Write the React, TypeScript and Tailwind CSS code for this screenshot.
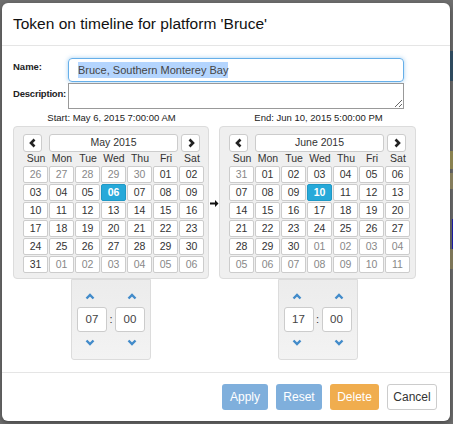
import React from "react";

const FONT = { fontFamily: '"Liberation Sans", Arial, sans-serif' };

type Day = { d: string; other?: boolean; active?: boolean };

function mk(list: (string | [string, boolean])[][], active: string): Day[][] {
  return list.map((row) =>
    row.map((c) =>
      typeof c === "string"
        ? { d: c, active: c === active }
        : { d: c[0], other: c[1] }
    )
  );
}

const o = (d: string): [string, boolean] => [d, true];

const MAY = mk(
  [
    [o("26"), o("27"), o("28"), o("29"), o("30"), "01", "02"],
    ["03", "04", "05", "06", "07", "08", "09"],
    ["10", "11", "12", "13", "14", "15", "16"],
    ["17", "18", "19", "20", "21", "22", "23"],
    ["24", "25", "26", "27", "28", "29", "30"],
    ["31", o("01"), o("02"), o("03"), o("04"), o("05"), o("06")],
  ],
  "06"
);

const JUNE = mk(
  [
    [o("31"), "01", "02", "03", "04", "05", "06"],
    ["07", "08", "09", "10", "11", "12", "13"],
    ["14", "15", "16", "17", "18", "19", "20"],
    ["21", "22", "23", "24", "25", "26", "27"],
    ["28", "29", "30", o("01"), o("02"), o("03"), o("04")],
    [o("05"), o("06"), o("07"), o("08"), o("09"), o("10"), o("11")],
  ],
  "10"
);

const DOW = ["Sun", "Mon", "Tue", "Wed", "Thu", "Fri", "Sat"];

function Chevron({ dir }: { dir: "up" | "down" | "left" | "right" }) {
  const paths = {
    up: "M1.5 6.5 L5 3 L8.5 6.5",
    down: "M1.5 3.5 L5 7 L8.5 3.5",
    left: "M6.5 1.5 L3 5 L6.5 8.5",
    right: "M3.5 1.5 L7 5 L3.5 8.5",
  };
  const horiz = dir === "left" || dir === "right";
  return (
    <svg width="10" height="10" viewBox="0 0 10 10">
      <path
        d={paths[dir]}
        fill="none"
        stroke={horiz ? "#222" : "#428bca"}
        strokeWidth={horiz ? 2.6 : 2.4}
        strokeLinecap="butt"
        strokeLinejoin="miter"
      />
    </svg>
  );
}

function Calendar({ title, rows }: { title: string; rows: Day[][] }) {
  return (
    <div className="h-[153px] rounded-[4px] border border-[#dcdcdc] bg-[#efefef] pl-[9px] pt-[7px]">
      <div className="flex h-[18px] items-stretch">
        <div className="flex w-[19px] items-center justify-center rounded-[3px] border border-[#ccc] bg-white">
          <Chevron dir="left" />
        </div>
        <div className="ml-[7px] flex w-[129px] items-center justify-center rounded-[3px] border border-[#ccc] bg-white text-[10.5px] text-[#333]">
          {title}
        </div>
        <div className="ml-[3px] flex w-[19px] items-center justify-center rounded-[3px] border border-[#ccc] bg-white">
          <Chevron dir="right" />
        </div>
      </div>
      <div className="flex h-[14px] items-center">
        {DOW.map((d) => (
          <div key={d} className="w-[26px] text-center text-[10.5px] text-[#333]">
            {d}
          </div>
        ))}
      </div>
      <div className="flex flex-col gap-px">
        {rows.map((r, i) => (
          <div key={i} className="flex gap-px">
            {r.map((c, j) => (
              <div
                key={j}
                className={
                  c.active
                    ? "flex h-[17px] w-[25px] items-center justify-center rounded-[2px] border border-[#1f98c5] bg-[#27a9d9] text-[10.5px] font-bold text-white"
                    : c.other
                    ? "flex h-[17px] w-[25px] items-center justify-center rounded-[2px] border border-[#ccc] bg-white text-[10.5px] text-[#888]"
                    : "flex h-[17px] w-[25px] items-center justify-center rounded-[2px] border border-[#ccc] bg-white text-[10.5px] text-[#333]"
                }
              >
                {c.d}
              </div>
            ))}
          </div>
        ))}
      </div>
    </div>
  );
}

function TimePicker({ h, m }: { h: string; m: string }) {
  return (
    <div className="flex h-[81px] w-[80px] flex-col items-center rounded-b-[3px] border border-[#dcdcdc] bg-gradient-to-b from-[#ececec] to-[#f3f3f3] pt-[12px]">
      <div className="flex gap-[4px]">
        <div className="flex w-[30px] justify-center">
          <Chevron dir="up" />
        </div>
        <div className="w-[4px]" />
        <div className="flex w-[30px] justify-center">
          <Chevron dir="up" />
        </div>
      </div>
      <div className="mt-[5px] flex items-center gap-[2px]">
        <div className="flex h-[25px] w-[30px] items-center justify-center rounded-[3px] border border-[#ccc] bg-white text-[11.5px] text-[#444]">
          {h}
        </div>
        <div className="w-[4px] text-center text-[11px] text-[#333]">:</div>
        <div className="flex h-[25px] w-[30px] items-center justify-center rounded-[3px] border border-[#ccc] bg-white text-[11.5px] text-[#444]">
          {m}
        </div>
      </div>
      <div className="mt-[5px] flex gap-[4px]">
        <div className="flex w-[30px] justify-center">
          <Chevron dir="down" />
        </div>
        <div className="w-[4px]" />
        <div className="flex w-[30px] justify-center">
          <Chevron dir="down" />
        </div>
      </div>
    </div>
  );
}

export default function App() {
  return (
    <div className="flex h-[424px] w-[453px] bg-[#6f6f6f] pl-[2px] pt-[3px]" style={FONT}>
      {/* Modal */}
      <div className="flex h-[418px] w-[448px] flex-col rounded-[6px] bg-white shadow-[0_2px_6px_rgba(0,0,0,0.4)]">
        {/* Header */}
        <div className="flex h-[43px] shrink-0 items-center border-b border-[#e5e5e5] pl-[11px]">
          <h4 className="text-[15.5px] leading-none text-[#111]">Token on timeline for platform 'Bruce'</h4>
        </div>

        {/* Body */}
        <div className="flex flex-col px-[11px] pt-[12px]">
          <div className="flex">
            <label className="w-[55px] pt-[2px] text-[9.5px] font-bold text-[#222]">Name:</label>
            <div className="flex h-[24px] w-[336px] items-center rounded-[4px] border border-[#66afe9] pl-[9px] text-[11px] text-[#444] shadow-[0_0_4px_rgba(102,175,233,0.6)]">
              <span className="bg-[#b4d5fe]">Bruce, Southern Monterey Bay</span>
            </div>
          </div>
          <div className="mt-px flex">
            <label className="w-[55px] whitespace-nowrap pt-[4px] text-[9.5px] font-bold tracking-[-0.2px] text-[#222]">Description:</label>
            <textarea className="h-[26px] w-[336px] border border-[#999] bg-white text-[12px] outline-none" />
          </div>

          <div className="mt-[2px] flex h-[14px] items-center text-[9.5px] text-[#222]">
            <div className="w-[197px] text-center">Start: May 6, 2015 7:00:00 AM</div>
            <div className="w-[10px]" />
            <div className="w-[197px] text-center">End: Jun 10, 2015 5:00:00 PM</div>
          </div>

          <div className="mt-px flex">
            <div className="flex w-[196px] flex-col items-center">
              <div className="w-full">
                <Calendar title="May 2015" rows={MAY} />
              </div>
              <TimePicker h="07" m="00" />
            </div>
            <div className="flex w-[10px] justify-center pt-[73px]">
              <svg width="9" height="9" viewBox="0 0 9 9">
                <path d="M0 3.5 H5 V1 L8.5 4.5 L5 8 V5.5 H0 Z" fill="#111" />
              </svg>
            </div>
            <div className="flex w-[197px] flex-col items-center">
              <div className="w-full">
                <Calendar title="June 2015" rows={JUNE} />
              </div>
              <TimePicker h="17" m="00" />
            </div>
          </div>
        </div>

        {/* Footer */}
        <div className="mt-auto flex h-[49px] items-center justify-end gap-[8px] border-t border-[#e5e5e5] pr-[13px]">
          <button className="h-[26px] w-[46px] rounded-[3px] bg-[#7fafdc] text-[12px] text-white">Apply</button>
          <button className="h-[26px] w-[46px] rounded-[3px] bg-[#7fafdc] text-[12px] text-white">Reset</button>
          <button className="h-[26px] w-[49px] rounded-[3px] bg-[#f0ad4e] text-[12px] text-white">Delete</button>
          <button className="h-[26px] w-[50px] rounded-[3px] border border-[#ccc] bg-white text-[12px] text-[#333]">Cancel</button>
        </div>
      </div>
      {/* backdrop edge */}
      <div className="flex w-[3px] flex-col">
        <div className="h-[48px]" />
        <div className="h-[30px] bg-[#2f4a5e]" />
        <div className="h-[70px]" />
        <div className="h-[18px] bg-[#8a8250]" />
        <div className="h-[4px]" />
        <div className="h-[16px] bg-[#857d5c]" />
        <div className="h-[30px]" />
        <div className="h-[30px] border-r border-[#1a1aa0]" />
        <div className="h-[20px] bg-[#7d7658]" />
      </div>
    </div>
  );
}
